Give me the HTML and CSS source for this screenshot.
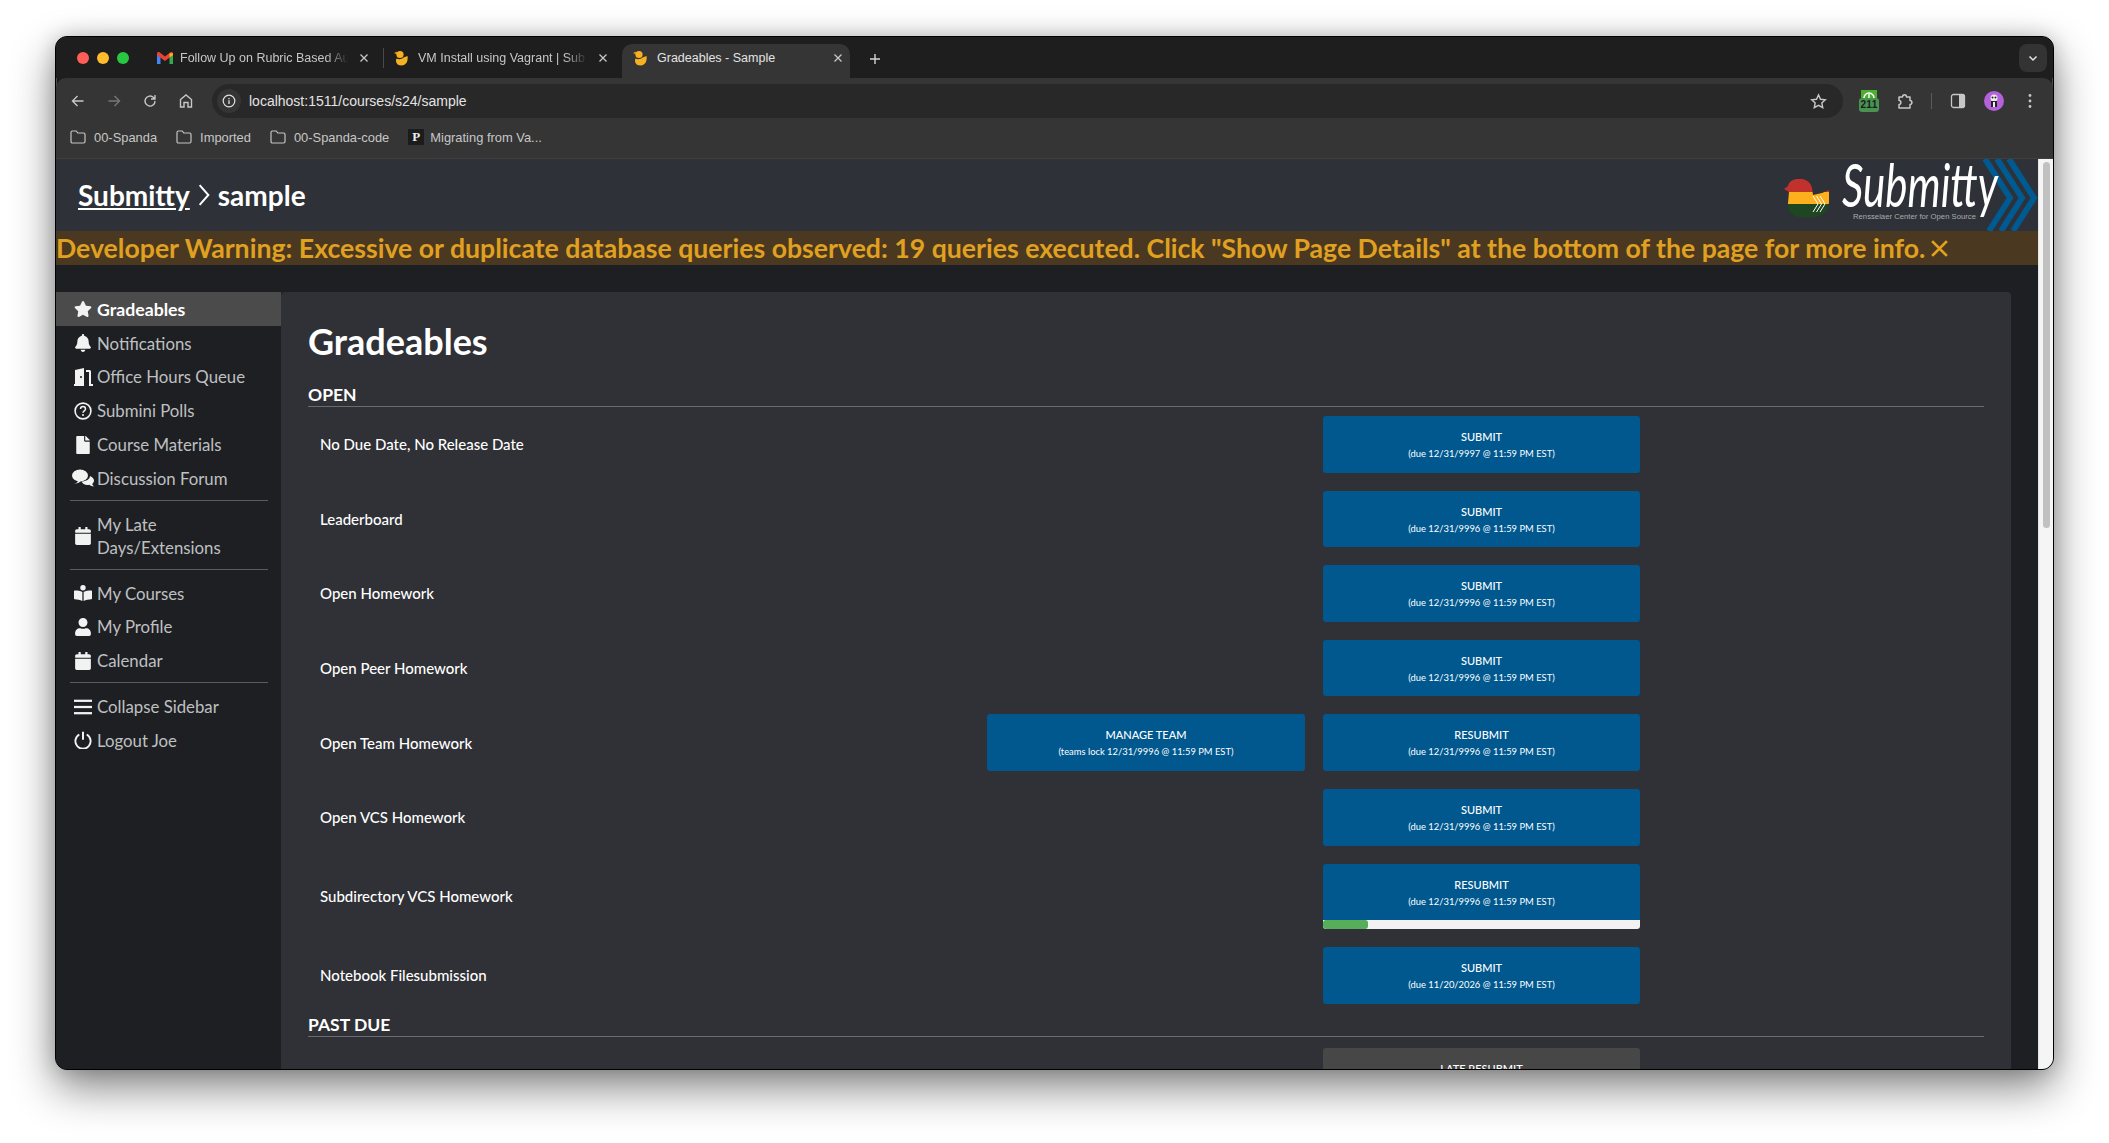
FILE: index.html
```html
<!DOCTYPE html>
<html lang="en">
<head>
  <meta charset="UTF-8">
  <title>Gradeables - Sample</title>
  <link rel="stylesheet" href="styles.css">
</head>
<body>
  <svg class="defs" width="0" height="0">
    <symbol id="i-duck" viewBox="0 0 16 16">
      <circle cx="7" cy="4.500" r="3.600" fill="#f5b11f"/>
      <path d="M4 1.500l-3 1.500 3 1.400z" fill="#e98f16"/>
      <path d="M3.500 8.500c2 1 5 1 7-1l4-1.500c1 5-1.500 9.500-6 9.500S2 12 3.500 8.500z" fill="#f5b11f"/>
    </symbol>
    <symbol id="i-folder" viewBox="0 0 16 14">
      <path d="M1 2.500C1 1.700 1.600 1 2.400 1h3.800l1.600 2h5.800c.8 0 1.400.7 1.400 1.400v7.100c0 .8-.6 1.500-1.400 1.500H2.400C1.600 13 1 12.300 1 11.500z" fill="none" stroke="#c4c7c5" stroke-width="1.200"/>
    </symbol>
    <symbol id="i-calendar" viewBox="0 0 448 512">
      <path d="M12 192h424c6.600 0 12 5.400 12 12v260c0 26.500-21.500 48-48 48H48c-26.500 0-48-21.500-48-48V204c0-6.600 5.400-12 12-12zm436-44v-36c0-26.500-21.500-48-48-48h-48V12c0-6.600-5.400-12-12-12h-40c-6.600 0-12 5.400-12 12v52H160V12c0-6.600-5.400-12-12-12h-40c-6.600 0-12 5.400-12 12v52H48C21.500 64 0 85.500 0 112v36c0 6.600 5.400 12 12 12h424c6.600 0 12-5.400 12-12z"/>
    </symbol>
    <symbol id="i-close" viewBox="0 0 12 12">
      <path d="M2.500 2.500l7 7M9.500 2.500l-7 7" fill="none" stroke="#c7c7c7" stroke-width="1.300"/>
    </symbol>
  </svg>

  <div class="window">
    <div class="tabstrip">
      <div class="lights">
        <span class="light red"></span>
        <span class="light yellow"></span>
        <span class="light green"></span>
      </div>
      <div class="tab tab-first">
        <svg class="favicon" viewBox="0 0 16 12">
          <path d="M0 2v10h3.500V5z" fill="#4285f4"/>
          <path d="M16 2v10h-3.500V5z" fill="#34a853"/>
          <path d="M0 1.500C0 0 1.500-.5 2.500.3L8 4.500 13.500.3C14.500-.5 16 0 16 1.500V3L8 9 0 3z" fill="#ea4335"/>
          <path d="M12.500 1.200L16 1.500V3l-3.500 2.500z" fill="#fbbc04"/>
        </svg>
        <span class="tab-title">Follow Up on Rubric Based Au</span>
        <svg class="tab-x"><use href="#i-close"/></svg>
      </div>
      <span class="tab-sep"></span>
      <div class="tab tab-second">
        <svg class="favicon"><use href="#i-duck"/></svg>
        <span class="tab-title">VM Install using Vagrant | Sub</span>
        <svg class="tab-x"><use href="#i-close"/></svg>
      </div>
      <div class="tab tab-active">
        <svg class="favicon"><use href="#i-duck"/></svg>
        <span class="tab-title">Gradeables - Sample</span>
        <svg class="tab-x"><use href="#i-close"/></svg>
      </div>
      <svg class="tab-new" viewBox="0 0 12 12"><path d="M6 1v10M1 6h10" fill="none" stroke="#d5d5d5" stroke-width="1.400"/></svg>
      <div class="tab-list">
        <svg viewBox="0 0 12 12"><path d="M2.500 4.500L6 8l3.500-3.500" fill="none" stroke="#e3e3e3" stroke-width="1.500"/></svg>
      </div>
    </div>

    <div class="toolbar">
      <div class="nav-icons">
        <svg viewBox="0 0 16 16"><path d="M13.500 8h-11M7.500 3l-5 5 5 5" fill="none" stroke="#c7c7c7" stroke-width="1.400"/></svg>
        <svg viewBox="0 0 16 16"><path d="M2.500 8h11M8.500 3l5 5-5 5" fill="none" stroke="#777" stroke-width="1.400"/></svg>
        <svg viewBox="0 0 16 16"><path d="M13 8a5 5 0 1 1-1.500-3.500L13 6M13 2v4H9" fill="none" stroke="#c7c7c7" stroke-width="1.400"/></svg>
        <svg viewBox="0 0 16 16"><path d="M2.500 14V6.500L8 2l5.500 4.500V14h-3.500v-4.500H6V14z" fill="none" stroke="#c7c7c7" stroke-width="1.400"/></svg>
      </div>
      <div class="omnibox">
        <span class="site-info">
          <svg viewBox="0 0 14 14"><circle cx="7" cy="7" r="5.800" fill="none" stroke="#e3e3e3" stroke-width="1.200"/><path d="M7 6.200V10M7 4v1.200" stroke="#e3e3e3" stroke-width="1.300"/></svg>
        </span>
        <span class="url">localhost:1511/courses/s24/sample</span>
        <svg class="star" viewBox="0 0 16 16"><path d="M8 1.800l1.900 4.100 4.500.5-3.300 3 .9 4.400L8 11.600l-4 2.200.9-4.400-3.300-3 4.500-.5z" fill="none" stroke="#c7c7c7" stroke-width="1.300"/></svg>
      </div>
      <div class="ext-icons">
        <div class="ext-211">
          <span class="ext-gauge">
            <svg viewBox="0 0 16 8"><path d="M3 8a5 5 0 0 1 10 0M8 8V4" fill="none" stroke="#fff" stroke-width="1.400"/></svg>
          </span>
          <span class="ext-count">211</span>
        </div>
        <svg class="ext-puzzle" viewBox="0 0 18 18"><path d="M3 5h3.500c0-3 4-3 4 0H14v3.500c2.500 0 2.500 4 0 4V16H3v-3.500c2.500 0 2.500-4 0-4z" fill="none" stroke="#c7c7c7" stroke-width="1.500" stroke-linejoin="round"/></svg>
        <span class="ext-sep"></span>
        <svg class="ext-panel" viewBox="0 0 16 16"><rect x="1.500" y="1.500" width="13" height="13" rx="2" fill="none" stroke="#c7c7c7" stroke-width="1.300"/><rect x="9" y="2" width="5" height="12" fill="#c7c7c7"/></svg>
        <svg class="avatar" viewBox="0 0 20 20">
          <circle cx="10" cy="10" r="10" fill="#b561dc"/>
          <circle cx="10" cy="7" r="3.500" fill="#eee"/>
          <circle cx="8.500" cy="6.500" r="1" fill="#222"/>
          <circle cx="11.500" cy="6.500" r="1" fill="#222"/>
          <rect x="7" y="10" width="6" height="6" fill="#222"/>
          <rect x="9" y="11" width="2" height="5" fill="#eee"/>
        </svg>
        <svg class="menu-dots" viewBox="0 0 4 16"><circle cx="2" cy="2.500" r="1.400" fill="#c7c7c7"/><circle cx="2" cy="8" r="1.400" fill="#c7c7c7"/><circle cx="2" cy="13.500" r="1.400" fill="#c7c7c7"/></svg>
      </div>
    </div>

    <div class="bookmarks">
      <span class="bookmark"><svg class="bm-folder"><use href="#i-folder"/></svg>00-Spanda</span>
      <span class="bookmark"><svg class="bm-folder"><use href="#i-folder"/></svg>Imported</span>
      <span class="bookmark"><svg class="bm-folder"><use href="#i-folder"/></svg>00-Spanda-code</span>
      <span class="bookmark"><span class="bm-p">P</span>Migrating from Va...</span>
    </div>

    <div class="page">
      <div class="site">
        <header class="site-header">
          <div class="breadcrumbs">
            <a class="crumb-link" href="#">Submitty</a>
            <svg class="crumb-sep" viewBox="0 0 12 22"><path d="M2 2l8 9-8 9" fill="none" stroke="#fff" stroke-width="1.800"/></svg>
            <span>sample</span>
          </div>
          <svg class="logo" viewBox="0 0 254 72">
            <defs>
              <clipPath id="duck-clip"><path d="M0 10L4 7C6-3 26-3 28 9L29 16 38 14 45 11V24C44 33 38 38 30 38H16C8 38 3 32 4 24L5 13z"/></clipPath>
            </defs>
            <g transform="translate(0 20)" clip-path="url(#duck-clip)">
              <rect width="48" height="13" fill="#c0322b"/>
              <rect y="13" width="48" height="12" fill="#fdb01c"/>
              <rect y="25" width="48" height="13" fill="#1e4620"/>
            </g>
            <path d="M29 37l5 8-5 8M32.500 37l5 8-5 8M36 37l5 8-5 8" fill="none" stroke="#fff" stroke-width="1"/>
            <path d="M201 0l25 39-21 33M213 0l25 39-21 33M225 0l25 39-21 33" fill="none" stroke="#005a92" stroke-width="6"/>
            <text class="logo-name" x="58" y="48" textLength="156" lengthAdjust="spacingAndGlyphs">Submitty</text>
            <text class="logo-tag" x="69" y="60" textLength="123" lengthAdjust="spacingAndGlyphs">Rensselaer Center for Open Source</text>
          </svg>
        </header>

        <div class="dev-warning">
          <span>Developer Warning: Excessive or duplicate database queries observed: 19 queries executed. Click "Show Page Details" at the bottom of the page for more info.</span>
          <svg class="dev-close" viewBox="0 0 18 18"><path d="M2 2l14 14M16 2L2 16" fill="none" stroke="#e0a020" stroke-width="2.600"/></svg>
        </div>

        <div class="site-body">
          <nav class="sidebar">
            <a class="nav-item active" href="#">
              <svg class="nav-icon" viewBox="0 0 576 512"><path d="M259.300 17.800L194 150.200 47.900 171.500c-26.200 3.800-36.700 36.100-17.700 54.600l105.700 103-25 145.500c-4.500 26.300 23.200 46 46.400 33.700L288 439.600l130.700 68.700c23.200 12.200 50.900-7.400 46.400-33.700l-25-145.500 105.700-103c19-18.500 8.500-50.800-17.700-54.600L382 150.200 316.700 17.800c-11.700-23.600-45.600-23.900-57.400 0z"/></svg>
              <span>Gradeables</span>
            </a>
            <a class="nav-item" href="#">
              <svg class="nav-icon" viewBox="0 0 448 512"><path d="M224 512c35.320 0 63.970-28.650 63.970-64H160.030c0 35.350 28.650 64 63.970 64zm215.390-149.710c-19.320-20.760-55.470-51.990-55.470-154.290 0-77.700-54.480-139.900-127.940-155.160V32c0-17.670-14.320-32-31.980-32s-31.980 14.330-31.980 32v20.840C118.560 68.100 64.080 130.300 64.080 208c0 102.300-36.150 133.530-55.470 154.290-6 6.450-8.660 14.160-8.610 21.710.11 16.400 12.980 32 32.100 32h383.800c19.120 0 32-15.600 32.100-32 .05-7.550-2.610-15.270-8.610-21.710z"/></svg>
              <span>Notifications</span>
            </a>
            <a class="nav-item" href="#">
              <svg class="nav-icon icon-door" viewBox="0 0 20 18"><path d="M1 18v-2h1V2l9-2v18zM8 8a1 1 0 1 0 .01 0zM13 2h3.500c.8 0 1.500.7 1.500 1.500V16h2v2h-4V4h-3z"/></svg>
              <span>Office Hours Queue</span>
            </a>
            <a class="nav-item" href="#">
              <svg class="nav-icon" viewBox="0 0 18 18"><circle cx="9" cy="9" r="7.900" fill="none" stroke="currentColor" stroke-width="1.600"/><path d="M6.500 7c0-3.300 5-3.300 5 0 0 2-2.500 1.800-2.500 3.800" fill="none" stroke="currentColor" stroke-width="1.500"/><circle cx="9" cy="13" r="1"/></svg>
              <span>Submini Polls</span>
            </a>
            <a class="nav-item" href="#">
              <svg class="nav-icon" viewBox="0 0 384 512"><path d="M224 136V0H24C10.700 0 0 10.700 0 24v464c0 13.300 10.700 24 24 24h336c13.300 0 24-10.700 24-24V160H248c-13.200 0-24-10.800-24-24zm160-14.100v6.100H256V0h6.100c6.400 0 12.500 2.500 17 7l97.900 98c4.500 4.500 7 10.600 7 16.900z"/></svg>
              <span>Course Materials</span>
            </a>
            <a class="nav-item" href="#">
              <svg class="nav-icon icon-wide" viewBox="0 0 22 17"><ellipse cx="8" cy="6" rx="8" ry="6"/><path d="M2 14c2 0 4-1 4-3l3 0C8 13 5 14.500 2 14z"/><path d="M18 6.500c2.500 1 4 3 4 4.500 0 1.500-.8 2.700-1.800 3.500.2 1 .8 1.800 1.800 2.300-2 0-3.500-.6-4.500-1.600-4 .8-7-.8-8-3.200 4.500 0 8.500-2.500 8.500-5.500z"/></svg>
              <span>Discussion Forum</span>
            </a>
            <hr class="nav-sep">
            <a class="nav-item nav-tall" href="#">
              <svg class="nav-icon"><use href="#i-calendar"/></svg>
              <span>My Late Days/Extensions</span>
            </a>
            <hr class="nav-sep">
            <a class="nav-item" href="#">
              <svg class="nav-icon" viewBox="0 0 20 18"><circle cx="10" cy="3.200" r="3"/><path d="M9.300 7.800C7 6.500 3.500 6 .8 6.100c-.4 0-.8.300-.8.800v8.200c0 .4.300.7.800.8 2.800.1 6 .7 8.500 2.100zM10.700 7.800C13 6.500 16.500 6 19.200 6.100c.4 0 .8.300.8.800v8.200c0 .4-.3.700-.8.800-2.800.1-6 .7-8.500 2.100z"/></svg>
              <span>My Courses</span>
            </a>
            <a class="nav-item" href="#">
              <svg class="nav-icon" viewBox="0 0 448 512"><path d="M224 256c70.700 0 128-57.300 128-128S294.700 0 224 0 96 57.300 96 128s57.300 128 128 128zm89.600 32h-16.700c-22.200 10.200-46.900 16-72.900 16s-50.600-5.800-72.900-16h-16.700C60.200 288 0 348.200 0 422.400V464c0 26.500 21.500 48 48 48h352c26.500 0 48-21.500 48-48v-41.600c0-74.200-60.200-134.400-134.400-134.400z"/></svg>
              <span>My Profile</span>
            </a>
            <a class="nav-item" href="#">
              <svg class="nav-icon"><use href="#i-calendar"/></svg>
              <span>Calendar</span>
            </a>
            <hr class="nav-sep">
            <a class="nav-item" href="#">
              <svg class="nav-icon" viewBox="0 0 16 16"><rect y="1.500" width="16" height="2"/><rect y="7" width="16" height="2"/><rect y="12.500" width="16" height="2"/></svg>
              <span>Collapse Sidebar</span>
            </a>
            <a class="nav-item" href="#">
              <svg class="nav-icon" viewBox="0 0 18 18"><path d="M5.300 3.500a7.600 7.600 0 1 0 7.400 0" fill="none" stroke="currentColor" stroke-width="1.900"/><path d="M9 .8v8" fill="none" stroke="currentColor" stroke-width="2"/></svg>
              <span>Logout Joe</span>
            </a>
          </nav>

          <main class="content">
            <h1>Gradeables</h1>

            <h2>OPEN</h2>
            <div class="gradeable">
              <span class="gradeable-name">No Due Date, No Release Date</span>
              <a class="btn col-submit" href="#"><b>SUBMIT</b><small>(due 12/31/9997 @ 11:59 PM EST)</small></a>
            </div>
            <div class="gradeable">
              <span class="gradeable-name">Leaderboard</span>
              <a class="btn col-submit" href="#"><b>SUBMIT</b><small>(due 12/31/9996 @ 11:59 PM EST)</small></a>
            </div>
            <div class="gradeable">
              <span class="gradeable-name">Open Homework</span>
              <a class="btn col-submit" href="#"><b>SUBMIT</b><small>(due 12/31/9996 @ 11:59 PM EST)</small></a>
            </div>
            <div class="gradeable">
              <span class="gradeable-name">Open Peer Homework</span>
              <a class="btn col-submit" href="#"><b>SUBMIT</b><small>(due 12/31/9996 @ 11:59 PM EST)</small></a>
            </div>
            <div class="gradeable">
              <span class="gradeable-name">Open Team Homework</span>
              <a class="btn col-team" href="#"><b>MANAGE TEAM</b><small>(teams lock 12/31/9996 @ 11:59 PM EST)</small></a>
              <a class="btn col-submit" href="#"><b>RESUBMIT</b><small>(due 12/31/9996 @ 11:59 PM EST)</small></a>
            </div>
            <div class="gradeable">
              <span class="gradeable-name">Open VCS Homework</span>
              <a class="btn col-submit" href="#"><b>SUBMIT</b><small>(due 12/31/9996 @ 11:59 PM EST)</small></a>
            </div>
            <div class="gradeable">
              <span class="gradeable-name">Subdirectory VCS Homework</span>
              <div class="col-submit">
                <a class="btn btn-progress" href="#"><b>RESUBMIT</b><small>(due 12/31/9996 @ 11:59 PM EST)</small></a>
                <div class="progress"><div class="progress-fill" style="width: 14.200%"></div></div>
              </div>
            </div>
            <div class="gradeable">
              <span class="gradeable-name">Notebook Filesubmission</span>
              <a class="btn col-submit" href="#"><b>SUBMIT</b><small>(due 11/20/2026 @ 11:59 PM EST)</small></a>
            </div>

            <h2 class="past-due">PAST DUE</h2>
            <div class="gradeable">
              <span class="gradeable-name"></span>
              <a class="btn btn-late col-submit" href="#"><b>LATE RESUBMIT</b><small>(due 12/31/1996 @ 11:59 PM EST)</small></a>
            </div>
          </main>
        </div>
      </div>
      <div class="scrollbar"><div class="scrollbar-thumb"></div></div>
    </div>
  </div>
</body>
</html>
```

FILE: styles.css
```css
* {
  box-sizing: border-box;
}

html,
body {
  height: 100%;
}

body {
  margin: 0;
  padding: 36px 55px 0;
  background: #fff;
  font-family: "Liberation Sans", Arial, sans-serif;
  overflow: hidden;
}

a {
  color: inherit;
  text-decoration: none;
}

.defs {
  display: block;
  height: 0;
}

/* Browser window */
.window {
  width: 1999px;
  height: 1034px;
  display: flex;
  flex-direction: column;
  background: #1e1e1e;
  border: 1px solid #000;
  border-radius: 12px;
  box-shadow: 0 18px 44px rgba(0, 0, 0, 0.48), 0 0 20px rgba(0, 0, 0, 0.18), inset 0 0 0 1px #4c4c4c;
  overflow: hidden;
}

.tabstrip {
  height: 41px;
  flex: none;
  display: flex;
  padding-top: 7px;
  background: #1e1e1e;
}

.lights {
  width: 101px;
  display: flex;
  gap: 8px;
  padding: 8px 0 0 21px;
}

.light {
  width: 12px;
  height: 12px;
  border-radius: 50%;
}

.light.red { background: #ff5f57; }
.light.yellow { background: #febc2e; }
.light.green { background: #28c840; }

.tab {
  height: 34px;
  display: flex;
  align-items: center;
  padding-bottom: 6px;
  color: #c7c7c7;
  font-size: 12.500px;
  white-space: nowrap;
}

.tab-first {
  width: 226px;
}

.tab-second {
  width: 238px;
  padding-left: 9px;
}

.tab-sep {
  width: 1px;
  height: 20px;
  margin-top: 4px;
  background: #4a4a4a;
}

.tab-active {
  width: 228px;
  padding-left: 10px;
  background: #353535;
  border-radius: 10px 10px 0 0;
  color: #e3e3e3;
}

.favicon {
  width: 16px;
  height: 16px;
  margin-right: 9px;
  flex: none;
}

.tab-first .favicon {
  height: 12px;
  margin-right: 7px;
}

.tab-title {
  flex: 1;
  overflow: hidden;
  min-width: 0;
}

.tab-first .tab-title,
.tab-second .tab-title {
  -webkit-mask-image: linear-gradient(to right, #000 85%, transparent 98%);
  mask-image: linear-gradient(to right, #000 85%, transparent 98%);
}

.tab-x {
  width: 12px;
  height: 12px;
  margin-right: 6px;
  flex: none;
}

.tab-first .tab-x,
.tab-second .tab-x {
  margin-left: 6px;
  margin-right: 13px;
}

.tab-new {
  width: 12px;
  height: 12px;
  margin: 9px 0 0 19px;
}

.tab-list {
  width: 28px;
  height: 28px;
  margin: 0 6px 0 auto;
  display: flex;
  align-items: center;
  justify-content: center;
  background: #333;
  border-radius: 8px;
}

.tab-list svg {
  width: 12px;
  height: 12px;
}

.toolbar {
  height: 46px;
  flex: none;
  display: flex;
  align-items: center;
  background: #353535;
  border-radius: 10px 10px 0 0;
}

.nav-icons {
  width: 156px;
  flex: none;
  display: flex;
  gap: 20px;
  padding-left: 14px;
}

.nav-icons svg {
  width: 16px;
  height: 16px;
  flex: none;
}

.omnibox {
  width: 1631px;
  height: 34px;
  display: flex;
  align-items: center;
  background: #282828;
  border-radius: 17px;
  padding: 0 16px 0 5px;
}

.site-info {
  width: 24px;
  height: 24px;
  display: flex;
  align-items: center;
  justify-content: center;
  background: #353535;
  border-radius: 50%;
}

.site-info svg {
  width: 14px;
  height: 14px;
}

.url {
  flex: 1;
  padding-left: 8px;
  color: #e3e3e3;
  font-size: 14px;
}

.star {
  width: 17px;
  height: 17px;
}

.ext-icons {
  flex: 1;
  display: flex;
  align-items: center;
  padding-left: 16px;
}

.ext-211 {
  width: 20px;
  height: 23px;
  flex: none;
}

.ext-gauge {
  display: block;
  width: 16px;
  height: 8px;
  margin: 0 auto;
  background: #4caf32;
}

.ext-gauge svg {
  display: block;
  width: 16px;
  height: 8px;
}

.ext-count {
  display: block;
  height: 14px;
  background: #4a9152;
  border-radius: 3px;
  color: #14231a;
  font-size: 10px;
  font-weight: bold;
  line-height: 14px;
  text-align: center;
  letter-spacing: 0.300px;
}

.ext-puzzle {
  width: 18px;
  height: 18px;
  margin-left: 17px;
}

.ext-sep {
  width: 1px;
  height: 16px;
  margin: 0 18px 0 17px;
  background: #5a5a5a;
}

.ext-panel {
  width: 16px;
  height: 16px;
}

.avatar {
  width: 20px;
  height: 20px;
  margin-left: 18px;
}

.menu-dots {
  width: 4px;
  height: 16px;
  margin-left: 24px;
}

.bookmarks {
  height: 35px;
  flex: none;
  display: flex;
  align-items: center;
  gap: 19px;
  padding: 0 0 8px 14px;
  background: #353535;
  border-bottom: 1px solid #3f3f3f;
  color: #c7c7c7;
  font-size: 12.900px;
}

.bookmark {
  display: flex;
  align-items: center;
  gap: 8px;
}

.bm-folder {
  width: 16px;
  height: 14px;
}

.bm-p {
  width: 16px;
  height: 16px;
  background: #1c1c1c;
  color: #eee;
  font-family: "Liberation Serif", serif;
  font-size: 13px;
  font-weight: bold;
  line-height: 16px;
  text-align: center;
  margin-right: -2px;
}

/* Page */
.page {
  flex: 1;
  min-height: 0;
  display: flex;
  font-family: Lato, "Noto Sans", sans-serif;
}

.site {
  width: 1982px;
  display: flex;
  flex-direction: column;
  background: #1e1f22;
  overflow: hidden;
}

.scrollbar {
  width: 15px;
  padding: 3px 3px 0 4px;
  background: #f5f5f5;
  border-left: 1px solid #e4e4e4;
}

.scrollbar-thumb {
  height: 366px;
  background: #c1c1c1;
  border-radius: 4px;
}

.site-header {
  height: 72px;
  flex: none;
  display: flex;
  align-items: center;
  justify-content: space-between;
  padding-left: 22px;
  background: #2e3137;
}

.breadcrumbs {
  display: flex;
  align-items: center;
  gap: 7px;
  color: #fff;
  font-size: 28px;
  font-weight: 700;
}

.crumb-link {
  text-decoration: underline;
}

.crumb-sep {
  width: 14px;
  height: 24px;
}

.logo {
  width: 254px;
  height: 72px;
}

.logo-name {
  fill: #fff;
  font-family: Lato, sans-serif;
  font-size: 60px;
  font-style: italic;
  font-weight: 400;
}

.logo-tag {
  fill: #a9abae;
  font-family: "Liberation Sans", sans-serif;
  font-size: 8px;
}

.dev-warning {
  height: 34px;
  flex: none;
  display: flex;
  align-items: center;
  gap: 5px;
  background: #4a3820;
  color: #e0a020;
  font-size: 26.650px;
  font-weight: 700;
  white-space: nowrap;
}

.dev-close {
  width: 19px;
  height: 19px;
  flex: none;
}

.site-body {
  flex: 1;
  min-height: 0;
  display: flex;
  padding: 27px 27px 0 0;
}

.sidebar {
  width: 225px;
  flex: none;
  display: flex;
  flex-direction: column;
  background: #1e1f22;
}

.nav-item {
  height: 33.800px;
  flex: none;
  display: flex;
  align-items: center;
  gap: 5px;
  padding-left: 18px;
  padding-top: 1px;
  color: #bfc0c2;
  font-size: 16.800px;
}

.nav-item.active {
  background: #4b4b4b;
  color: #fff;
  font-size: 17.700px;
  font-weight: 700;
}

.nav-tall {
  height: 57px;
  line-height: 23px;
  padding-right: 30px;
}

.nav-icon {
  width: 18px;
  height: 18px;
  flex: none;
  fill: currentColor;
  color: #f2f2f2;
}

.icon-wide {
  width: 22px;
  margin: 0 -2px;
}

.icon-door {
  width: 20px;
  margin: 0 -1px;
}

.nav-sep {
  width: 198px;
  height: 1px;
  margin: 5px 0 6px 14px;
  flex: none;
  border: 0;
  background: #5b5c5f;
}

.content {
  flex: 1;
  min-width: 0;
  padding: 0 27px;
  background: #2f3136;
  border-radius: 4px 4px 0 0;
  color: #fff;
  overflow: hidden;
}

h1 {
  margin: 0;
  padding-top: 29px;
  height: 88px;
  font-size: 36px;
  font-weight: 700;
  line-height: 40px;
}

h2 {
  margin: 0 0 9px;
  height: 27px;
  border-bottom: 1px solid #6a6b6e;
  font-size: 17.500px;
  font-weight: 700;
  line-height: 30px;
}

h2.past-due {
  margin-top: -12px;
  margin-bottom: 11px;
}

.gradeable {
  display: grid;
  grid-template-columns: 649px 318px 317px;
  column-gap: 18px;
  align-items: center;
  margin-bottom: 18px;
  padding-left: 12px;
}

.gradeable-name {
  grid-column: 1;
  font-size: 15px;
  font-weight: 500;
}

.btn {
  height: 56.600px;
  display: flex;
  flex-direction: column;
  align-items: center;
  padding-top: 13px;
  background: #00588f;
  border-radius: 3px;
  color: #fff;
}

.btn b {
  font-size: 11px;
  font-weight: 500;
  line-height: 16px;
}

.btn small {
  margin-top: 1px;
  font-size: 9.400px;
  line-height: 16px;
}

.col-team {
  grid-column: 2;
}

.col-submit {
  grid-column: 3;
}

.btn-progress {
  border-radius: 3px 3px 0 0;
}

.btn-late {
  background: #474747;
}

.progress {
  height: 9px;
  background: #f2f2f2;
  border-radius: 0 0 3px 3px;
  overflow: hidden;
}

.progress-fill {
  height: 100%;
  background: #56ae5a;
  border-radius: 3px;
}
```
